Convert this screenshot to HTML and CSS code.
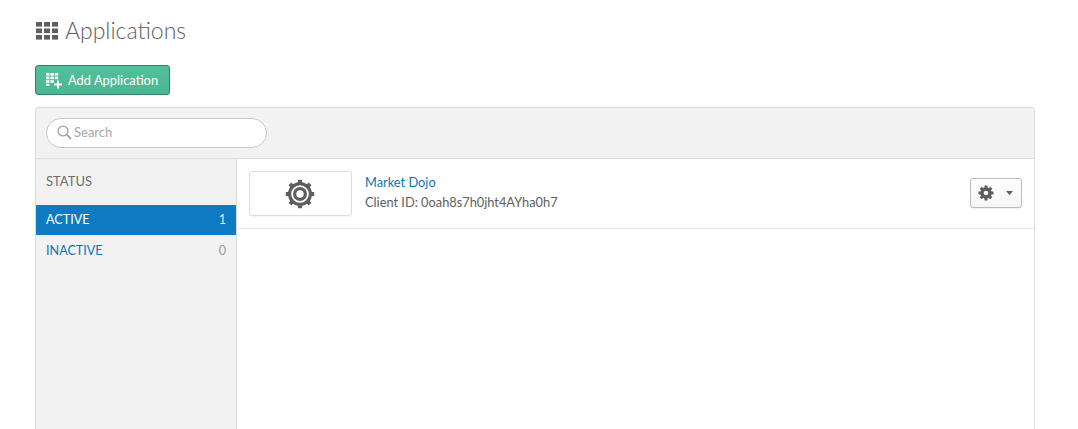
FILE: index.html
```html
<!DOCTYPE html>
<html lang="en">
<head>
<meta charset="utf-8">
<title>Applications</title>
<link rel="stylesheet" href="styles.css">
</head>
<body>
<main class="page">
  <h1 class="title">
    <svg class="title-icon" width="22" height="18" viewBox="0 0 22 18"><g fill="#5e5e5e"><rect x="0" y="0" width="6" height="4.6"/><rect x="8" y="0" width="6" height="4.6"/><rect x="16" y="0" width="6" height="4.6"/><rect x="0" y="6.5" width="6" height="4.6"/><rect x="8" y="6.5" width="6" height="4.6"/><rect x="16" y="6.5" width="6" height="4.6"/><rect x="0" y="13" width="6" height="4.6"/><rect x="8" y="13" width="6" height="4.6"/><rect x="16" y="13" width="6" height="4.6"/></g></svg>
    <span>Applications</span>
  </h1>
  <button class="add-btn" type="button">
    <svg width="17" height="16" viewBox="0 0 17 16"><g fill="#fff"><rect x="0" y="0" width="3.4" height="2.6"/><rect x="4.4" y="0" width="3.4" height="2.6"/><rect x="8.8" y="0" width="3.4" height="2.6"/><rect x="0" y="3.6" width="3.4" height="2.6"/><rect x="4.4" y="3.6" width="3.4" height="2.6"/><rect x="8.8" y="3.6" width="3.4" height="2.6"/><rect x="0" y="7.2" width="3.4" height="2.6"/><rect x="4.4" y="7.2" width="3.4" height="2.6"/><rect x="0" y="10.8" width="3.4" height="2"/><rect x="11" y="7.5" width="2" height="8"/><rect x="8" y="10.5" width="8" height="2"/></g></svg>
    <span>Add Application</span>
  </button>
  <section class="panel">
    <div class="toolbar">
      <label class="search">
        <svg width="15" height="15" viewBox="0 0 15 15"><circle cx="6" cy="6" r="4.9" fill="none" stroke="#a3a3a3" stroke-width="1.4"/><path d="M9.7 9.7 14 14" stroke="#a3a3a3" stroke-width="1.8" fill="none"/></svg>
        <span>Search</span>
      </label>
    </div>
    <div class="body">
      <aside class="side">
        <div class="side-head">STATUS</div>
        <div class="side-item active"><span>ACTIVE</span><span class="count">1</span></div>
        <div class="side-item"><span class="link">INACTIVE</span><span class="count">0</span></div>
      </aside>
      <div class="content">
        <div class="row">
          <div class="logo">
            <svg width="30" height="30" viewBox="0 0 30 30"><g fill="#5e5e5e"><path d="M15 3a12 12 0 1 0 0 24 12 12 0 0 0 0-24zm0 3.200a8.800 8.800 0 1 1 0 17.600 8.800 8.800 0 0 1 0-17.600z"/><path d="M15 8a7 7 0 1 0 0 14 7 7 0 0 0 0-14zm0 3.300a3.700 3.700 0 1 1 0 7.400 3.700 3.700 0 0 1 0-7.400z"/><rect x="13" y="0.800" width="4" height="3"/><rect x="13" y="26.200" width="4" height="3"/><rect x="0.800" y="13" width="3" height="4"/><rect x="26.200" y="13" width="3" height="4"/><rect x="13" y="0.800" width="4" height="3" transform="rotate(45 15 15)"/><rect x="13" y="26.200" width="4" height="3" transform="rotate(45 15 15)"/><rect x="0.800" y="13" width="3" height="4" transform="rotate(45 15 15)"/><rect x="26.200" y="13" width="3" height="4" transform="rotate(45 15 15)"/></g></svg>
          </div>
          <div class="info">
            <a class="name">Market Dojo</a>
            <div class="client">Client ID: 0oah8s7h0jht4AYha0h7</div>
          </div>
          <button class="gear-btn" type="button">
            <svg width="16" height="16" viewBox="0 0 16 16"><g fill="#5e5e5e"><path fill-rule="evenodd" d="M8 2.200a5.800 5.800 0 1 0 0 11.600A5.800 5.800 0 0 0 8 2.200zm0 3.500a2.300 2.300 0 1 1 0 4.600 2.300 2.300 0 0 1 0-4.600z"/><rect x="6.500" y="0.500" width="3" height="3"/><rect x="6.500" y="12.500" width="3" height="3"/><rect x="0.500" y="6.500" width="3" height="3"/><rect x="12.500" y="6.500" width="3" height="3"/><rect x="6.500" y="0.500" width="3" height="3" transform="rotate(45 8 8)"/><rect x="6.500" y="12.500" width="3" height="3" transform="rotate(45 8 8)"/><rect x="0.500" y="6.500" width="3" height="3" transform="rotate(45 8 8)"/><rect x="12.500" y="6.500" width="3" height="3" transform="rotate(45 8 8)"/></g></svg>
            <svg width="7" height="4" viewBox="0 0 7 4"><path d="M0 0h7L3.500 4z" fill="#5e5e5e"/></svg>
          </button>
        </div>
      </div>
    </div>
  </section>
</main>
</body>
</html>
```
FILE: styles.css
```css
* { box-sizing: border-box; }
html, body { margin: 0; height: 100%; overflow: hidden; background: #fff; }
body { font-family: Lato, "Liberation Sans", sans-serif; font-size: 12.8px; color: #5e5e5e; }
.page { padding: 0 43px 0 35px; height: 429px; display: flex; flex-direction: column; }
.title { margin: 16px 0 0 1px; height: 28px; display: flex; align-items: center; gap: 7px; font-weight: 300; font-size: 23px; color: #5e5e5e; }
.title-icon { margin-top: 1px; }
.add-btn { margin: 21px 0 0; width: 135px; height: 30px; padding: 0 0 0 10px; display: flex; align-items: center; gap: 5px; font: inherit; font-size: 12.9px; color: #fff; background: linear-gradient(#52c09c, #49b791); border: 1px solid #2f8467; border-radius: 3px; }
.add-btn svg { margin-top: 1px; }
.panel { margin-top: 12px; flex: 1; border: 1px solid #ddd; border-bottom: 0; border-radius: 3px 3px 0 0; display: flex; flex-direction: column; min-height: 0; }
.toolbar { height: 51px; flex: none; background: #f2f2f2; border-bottom: 1px solid #ddd; padding: 10px; }
.search { width: 221px; height: 30px; display: flex; align-items: center; gap: 2px; padding: 0 0 2px 10px; background: #fff; border: 1px solid #c8c8c8; border-radius: 15px; color: #a8a8a8; font-size: 13px; }
.body { flex: 1; display: flex; min-height: 0; }
.side { width: 201px; flex: none; background: #f2f2f2; border-right: 1px solid #ddd; }
.side-head { height: 46px; padding: 14px 10px 0; color: #6e6e6e; line-height: 16px; font-size: 13px; }
.side-item { height: 30px; padding: 0 10px; display: flex; align-items: center; justify-content: space-between; font-size: 12.6px; }
.side-item.active { background: #0e7ac1; color: #fff; padding-bottom: 1px; }
.link { color: #0e74b8; }
.count { color: #9a9a9a; }
.active .count { color: #d5e8f5; }
.content { flex: 1; background: #fff; min-width: 0; }
.row { height: 70px; border-bottom: 1px solid #e8e8e8; padding: 12px 12px 0; display: flex; align-items: flex-start; }
.logo { width: 103px; height: 45px; flex: none; display: flex; align-items: center; justify-content: center; padding-right: 2px; border: 1px solid #ddd; border-radius: 3px; box-shadow: 0 1px 1px rgba(0,0,0,.04); }
.info { flex: 1; margin: 1px 0 0 13px; line-height: 20px; }
.name { display: block; color: #0e74b8; }
.client { color: #5e5e5e; }
.gear-btn { width: 52px; height: 30px; margin-top: 7px; padding: 0 0 0 7px; display: flex; align-items: center; gap: 12px; background: linear-gradient(#fff, #f6f6f6); border: 1px solid #bbb; border-radius: 3px; box-shadow: 0 1px 1px rgba(0,0,0,.05); }
```
